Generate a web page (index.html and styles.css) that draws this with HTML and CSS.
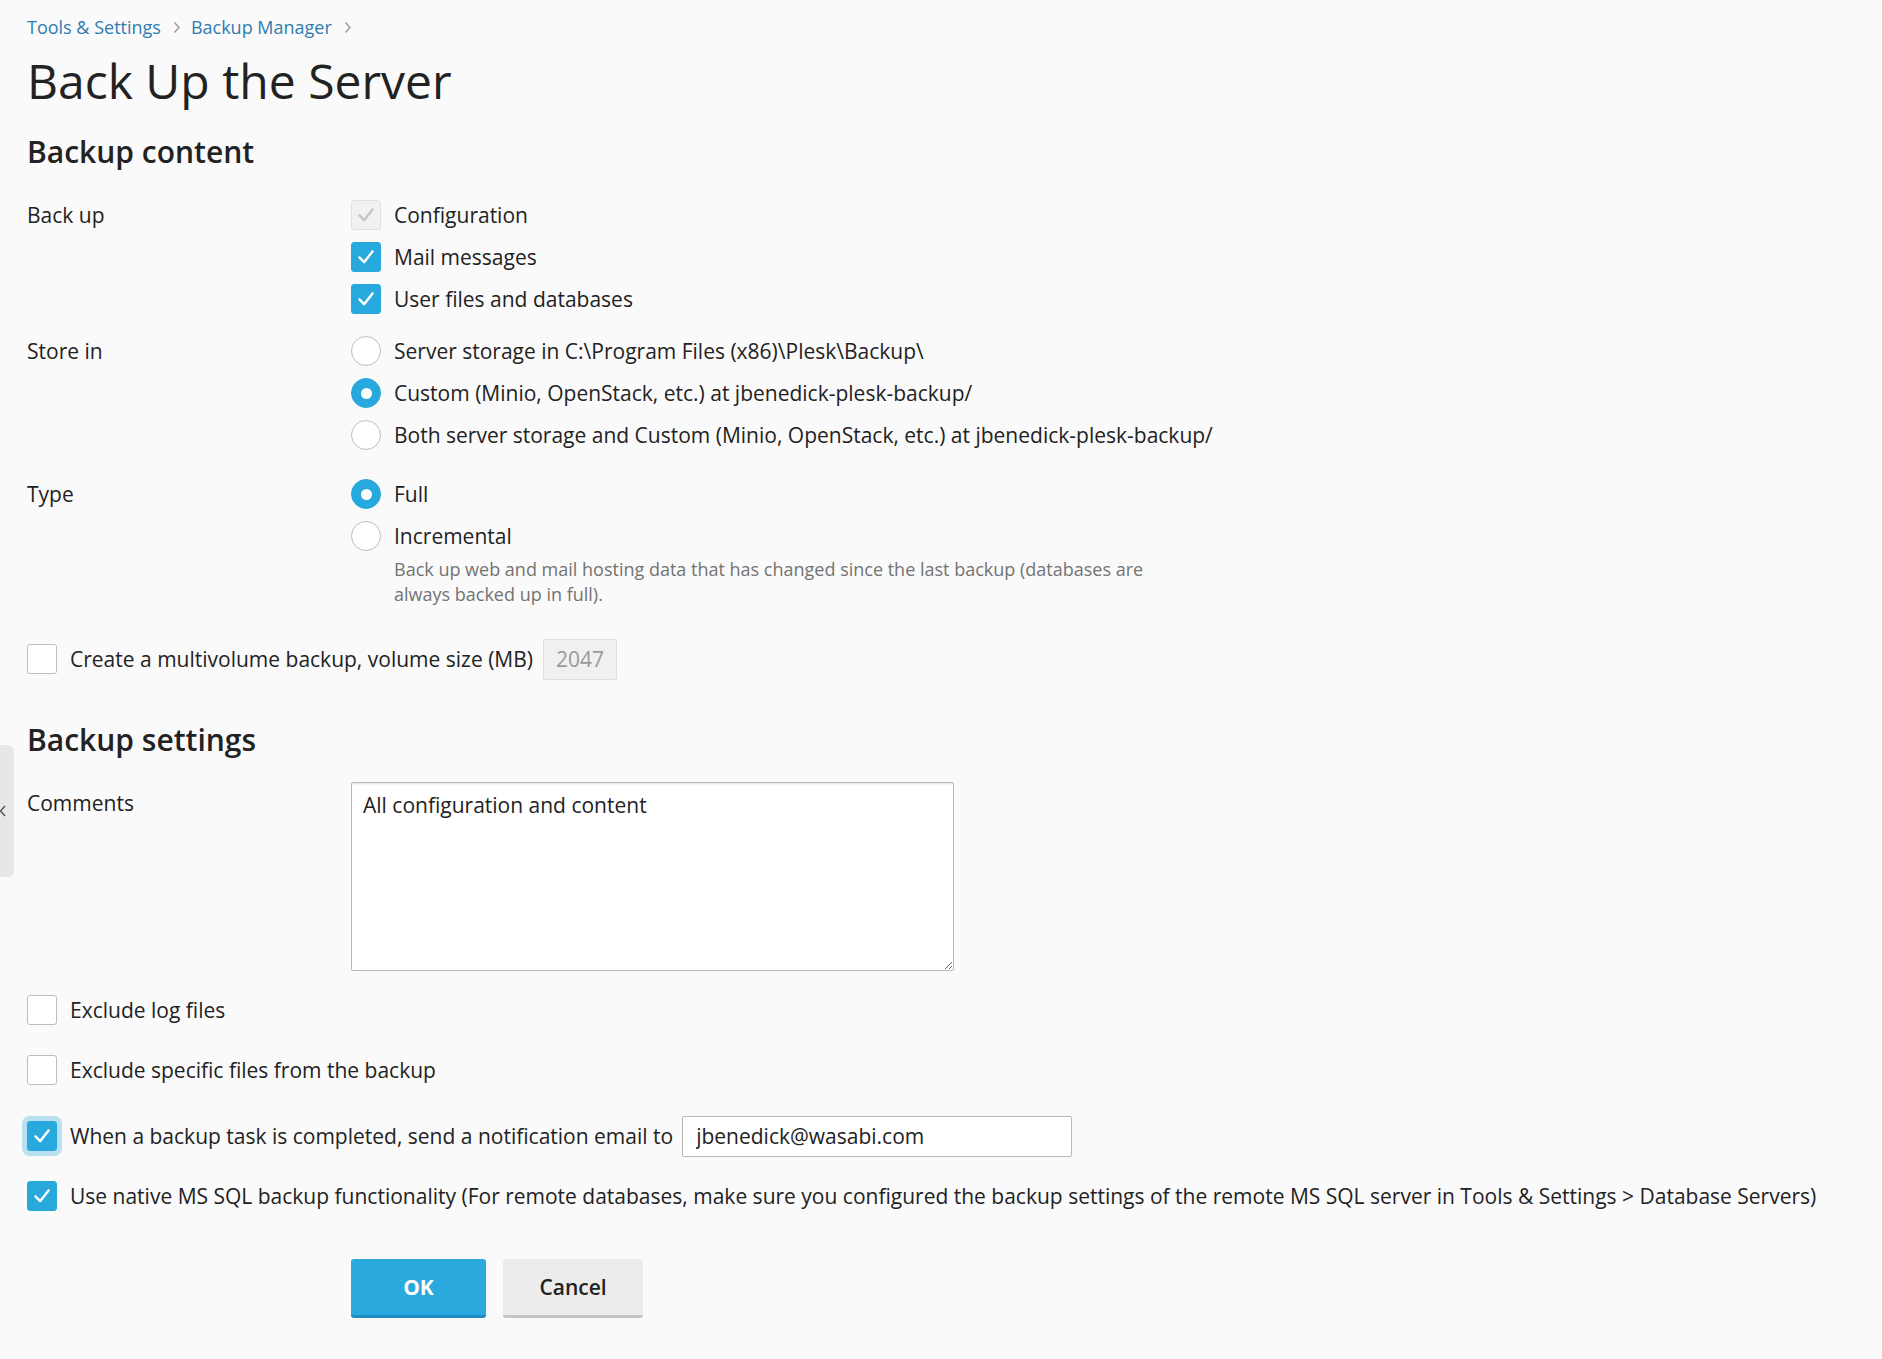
FILE: index.html
```html
<!DOCTYPE html>
<html lang="en">
<head>
<meta charset="utf-8">
<title>Back Up the Server</title>
<link rel="stylesheet" href="styles.css">
</head>
<body>
<div class="side-toggle"><svg width="8" height="12" viewBox="0 0 8 12"><polyline points="6,1 1.5,6 6,11" fill="none" stroke="#555" stroke-width="1.4"/></svg></div>
<div class="page">
  <nav class="breadcrumb">
    <a href="#">Tools &amp; Settings</a>
    <svg class="sep" width="8" height="13" viewBox="0 0 8 13"><polyline points="1.5,1.5 6,6.5 1.5,11.5" fill="none" stroke="#9a9a9a" stroke-width="1.4"/></svg>
    <a href="#">Backup Manager</a>
    <svg class="sep" width="8" height="13" viewBox="0 0 8 13"><polyline points="1.5,1.5 6,6.5 1.5,11.5" fill="none" stroke="#9a9a9a" stroke-width="1.4"/></svg>
  </nav>
  <h1 class="title">Back Up the Server</h1>

  <h2 class="section-title">Backup content</h2>
  <div class="section">
    <div class="field">
      <div class="field-label">Back up</div>
      <div class="field-controls">
        <div class="option"><span class="cb checked disabled"><svg viewBox="0 0 30 30"><polyline points="8,15.5 13,20.5 22,9" /></svg></span><span>Configuration</span></div>
        <div class="option"><span class="cb checked"><svg viewBox="0 0 30 30"><polyline points="8,15.5 13,20.5 22,9" /></svg></span><span>Mail messages</span></div>
        <div class="option"><span class="cb checked"><svg viewBox="0 0 30 30"><polyline points="8,15.5 13,20.5 22,9" /></svg></span><span>User files and databases</span></div>
      </div>
    </div>
    <div class="field">
      <div class="field-label">Store in</div>
      <div class="field-controls">
        <div class="option"><span class="rb"></span><span>Server storage in C:\Program Files (x86)\Plesk\Backup\</span></div>
        <div class="option"><span class="rb checked"></span><span>Custom (Minio, OpenStack, etc.) at jbenedick-plesk-backup/</span></div>
        <div class="option"><span class="rb"></span><span>Both server storage and Custom (Minio, OpenStack, etc.) at jbenedick-plesk-backup/</span></div>
      </div>
    </div>
    <div class="field field-type">
      <div class="field-label">Type</div>
      <div class="field-controls">
        <div class="option"><span class="rb checked"></span><span>Full</span></div>
        <div class="option"><span class="rb"></span><span>Incremental</span></div>
        <div class="hint">Back up web and mail hosting data that has changed since the last backup (databases are always backed up in full).</div>
      </div>
    </div>
    <div class="option multivolume"><span class="cb"></span><span>Create a multivolume backup, volume size (MB)</span><input class="input input-disabled" type="text" value="2047" disabled></div>
  </div>

  <h2 class="section-title settings-title">Backup settings</h2>
  <div class="section">
    <div class="field">
      <div class="field-label">Comments</div>
      <div class="field-controls">
        <textarea class="textarea">All configuration and content</textarea>
      </div>
    </div>
    <div class="option wide first-wide"><span class="cb"></span><span>Exclude log files</span></div>
    <div class="option wide"><span class="cb"></span><span>Exclude specific files from the backup</span></div>
    <div class="option wide email-row"><span class="cb checked focus"><svg viewBox="0 0 30 30"><polyline points="8,15.5 13,20.5 22,9" /></svg></span><span>When a backup task is completed, send a notification email to</span><input class="input input-email" type="text" value="jbenedick@wasabi.com"></div>
    <div class="option wide"><span class="cb checked"><svg viewBox="0 0 30 30"><polyline points="8,15.5 13,20.5 22,9" /></svg></span><span>Use native MS SQL backup functionality (For remote databases, make sure you configured the backup settings of the remote MS SQL server in Tools &amp; Settings &gt; Database Servers)</span></div>
  </div>

  <div class="actions">
    <button class="btn btn-primary" type="button">OK</button>
    <button class="btn btn-default" type="button">Cancel</button>
  </div>
</div>
</body>
</html>
```

FILE: styles.css
```css
html, body {
  margin: 0;
  padding: 0;
}

body {
  background: #fafafa;
  font-family: "Open Sans", "Noto Sans", sans-serif;
  font-size: 21px;
  color: #222;
  min-height: 1359px;
}

.page {
  padding: 15px 0 40px 27px;
}

.side-toggle {
  position: absolute;
  left: 0;
  top: 745px;
  width: 14px;
  height: 132px;
  background: #e7e7e7;
  border-radius: 0 6px 6px 0;
  display: flex;
  align-items: center;
}

.side-toggle svg {
  margin-left: -1px;
}

.breadcrumb {
  display: flex;
  align-items: center;
  font-size: 18px;
  line-height: 24px;
  height: 24px;
}

.breadcrumb a {
  color: #2f7cb0;
  text-decoration: none;
}

.breadcrumb .sep {
  margin: 1px 10px 0 12px;
}

.title {
  font-size: 48px;
  font-weight: 400;
  line-height: 56px;
  margin: 14px 0 0;
  color: #222;
}

.section-title {
  font-size: 30px;
  font-weight: 600;
  line-height: 36px;
  margin: 25px 0 0;
  color: #222;
}

.settings-title {
  margin-top: 42px;
}

.section {
  margin-top: 24px;
}

.field {
  display: grid;
  grid-template-columns: 324px 1fr;
}

.field + .field {
  margin-top: 10px;
}

.field.field-type {
  margin-top: 17px;
}

.field-label {
  line-height: 42px;
}

.option {
  display: flex;
  align-items: center;
  height: 42px;
  gap: 13px;
  white-space: nowrap;
}

.cb, .rb {
  flex: none;
  width: 30px;
  height: 30px;
  box-sizing: border-box;
  background: #fff;
  border: 1px solid #bdbdbd;
  display: flex;
  align-items: center;
  justify-content: center;
}

.cb {
  border-radius: 3px;
}

.cb svg {
  width: 30px;
  height: 30px;
  fill: none;
  stroke: #fff;
  stroke-width: 2.6;
  stroke-linecap: round;
  stroke-linejoin: round;
}

.cb.checked {
  background: #28a9de;
  border-color: #28a9de;
}

.cb.checked.disabled {
  background: #f1f1f1;
  border-color: #e0e0e0;
}

.cb.checked.disabled svg {
  stroke: #c4c4c4;
}

.cb.focus {
  box-shadow: 0 0 0 5px rgba(40, 169, 222, 0.3);
}

.rb {
  border-radius: 50%;
}

.rb.checked {
  background: #28a9de;
  border-color: #28a9de;
}

.rb.checked::after {
  content: "";
  width: 11px;
  height: 11px;
  border-radius: 50%;
  background: #fff;
}

.hint {
  padding-left: 43px;
  font-size: 18px;
  line-height: 25px;
  color: #737373;
  max-width: 790px;
}

.multivolume {
  margin-top: 31px;
}

.input {
  box-sizing: border-box;
  height: 41px;
  font-family: "Open Sans", "Noto Sans", sans-serif;
  font-size: 21px;
  border-radius: 2px;
  outline: none;
}

.input-disabled {
  width: 74px;
  padding: 0 12px;
  margin-left: -3px;
  background: #f0f0f0;
  border: 1px solid #dedede;
  color: #9a9a9a;
}

.input-email {
  width: 390px;
  padding: 0 13px;
  margin-left: -4px;
  background: #fff;
  border: 1px solid #b8b8b8;
  color: #222;
}

.textarea {
  display: block;
  box-sizing: border-box;
  width: 603px;
  height: 189px;
  padding: 8px 11px;
  margin: 0;
  font-family: "Open Sans", "Noto Sans", sans-serif;
  font-size: 21px;
  line-height: 28px;
  color: #222;
  background: #fff;
  border: 1px solid #b8b8b8;
  border-radius: 2px;
  box-shadow: inset 0 3px 2px -2px rgba(0, 0, 0, 0.12);
  resize: both;
  outline: none;
}

.option.wide.first-wide {
  margin-top: 18px;
}

.option.wide + .option.wide {
  margin-top: 18px;
}

.option.wide + .option.wide.email-row {
  margin-top: 24px;
}

.actions {
  margin-top: 42px;
  padding-left: 324px;
  display: flex;
  gap: 17px;
}

.btn {
  box-sizing: border-box;
  height: 59px;
  border: none;
  border-radius: 3px;
  font-family: "Open Sans", "Noto Sans", sans-serif;
  font-size: 21px;
  cursor: pointer;
  padding: 0;
}

.btn-primary {
  width: 135px;
  background: #29a9de;
  border-bottom: 3px solid #1f8cc2;
  color: #fff;
  font-weight: 700;
}

.btn-default {
  width: 140px;
  background: #ececec;
  border-bottom: 3px solid #c4c4c4;
  color: #222;
  font-weight: 600;
}
```
